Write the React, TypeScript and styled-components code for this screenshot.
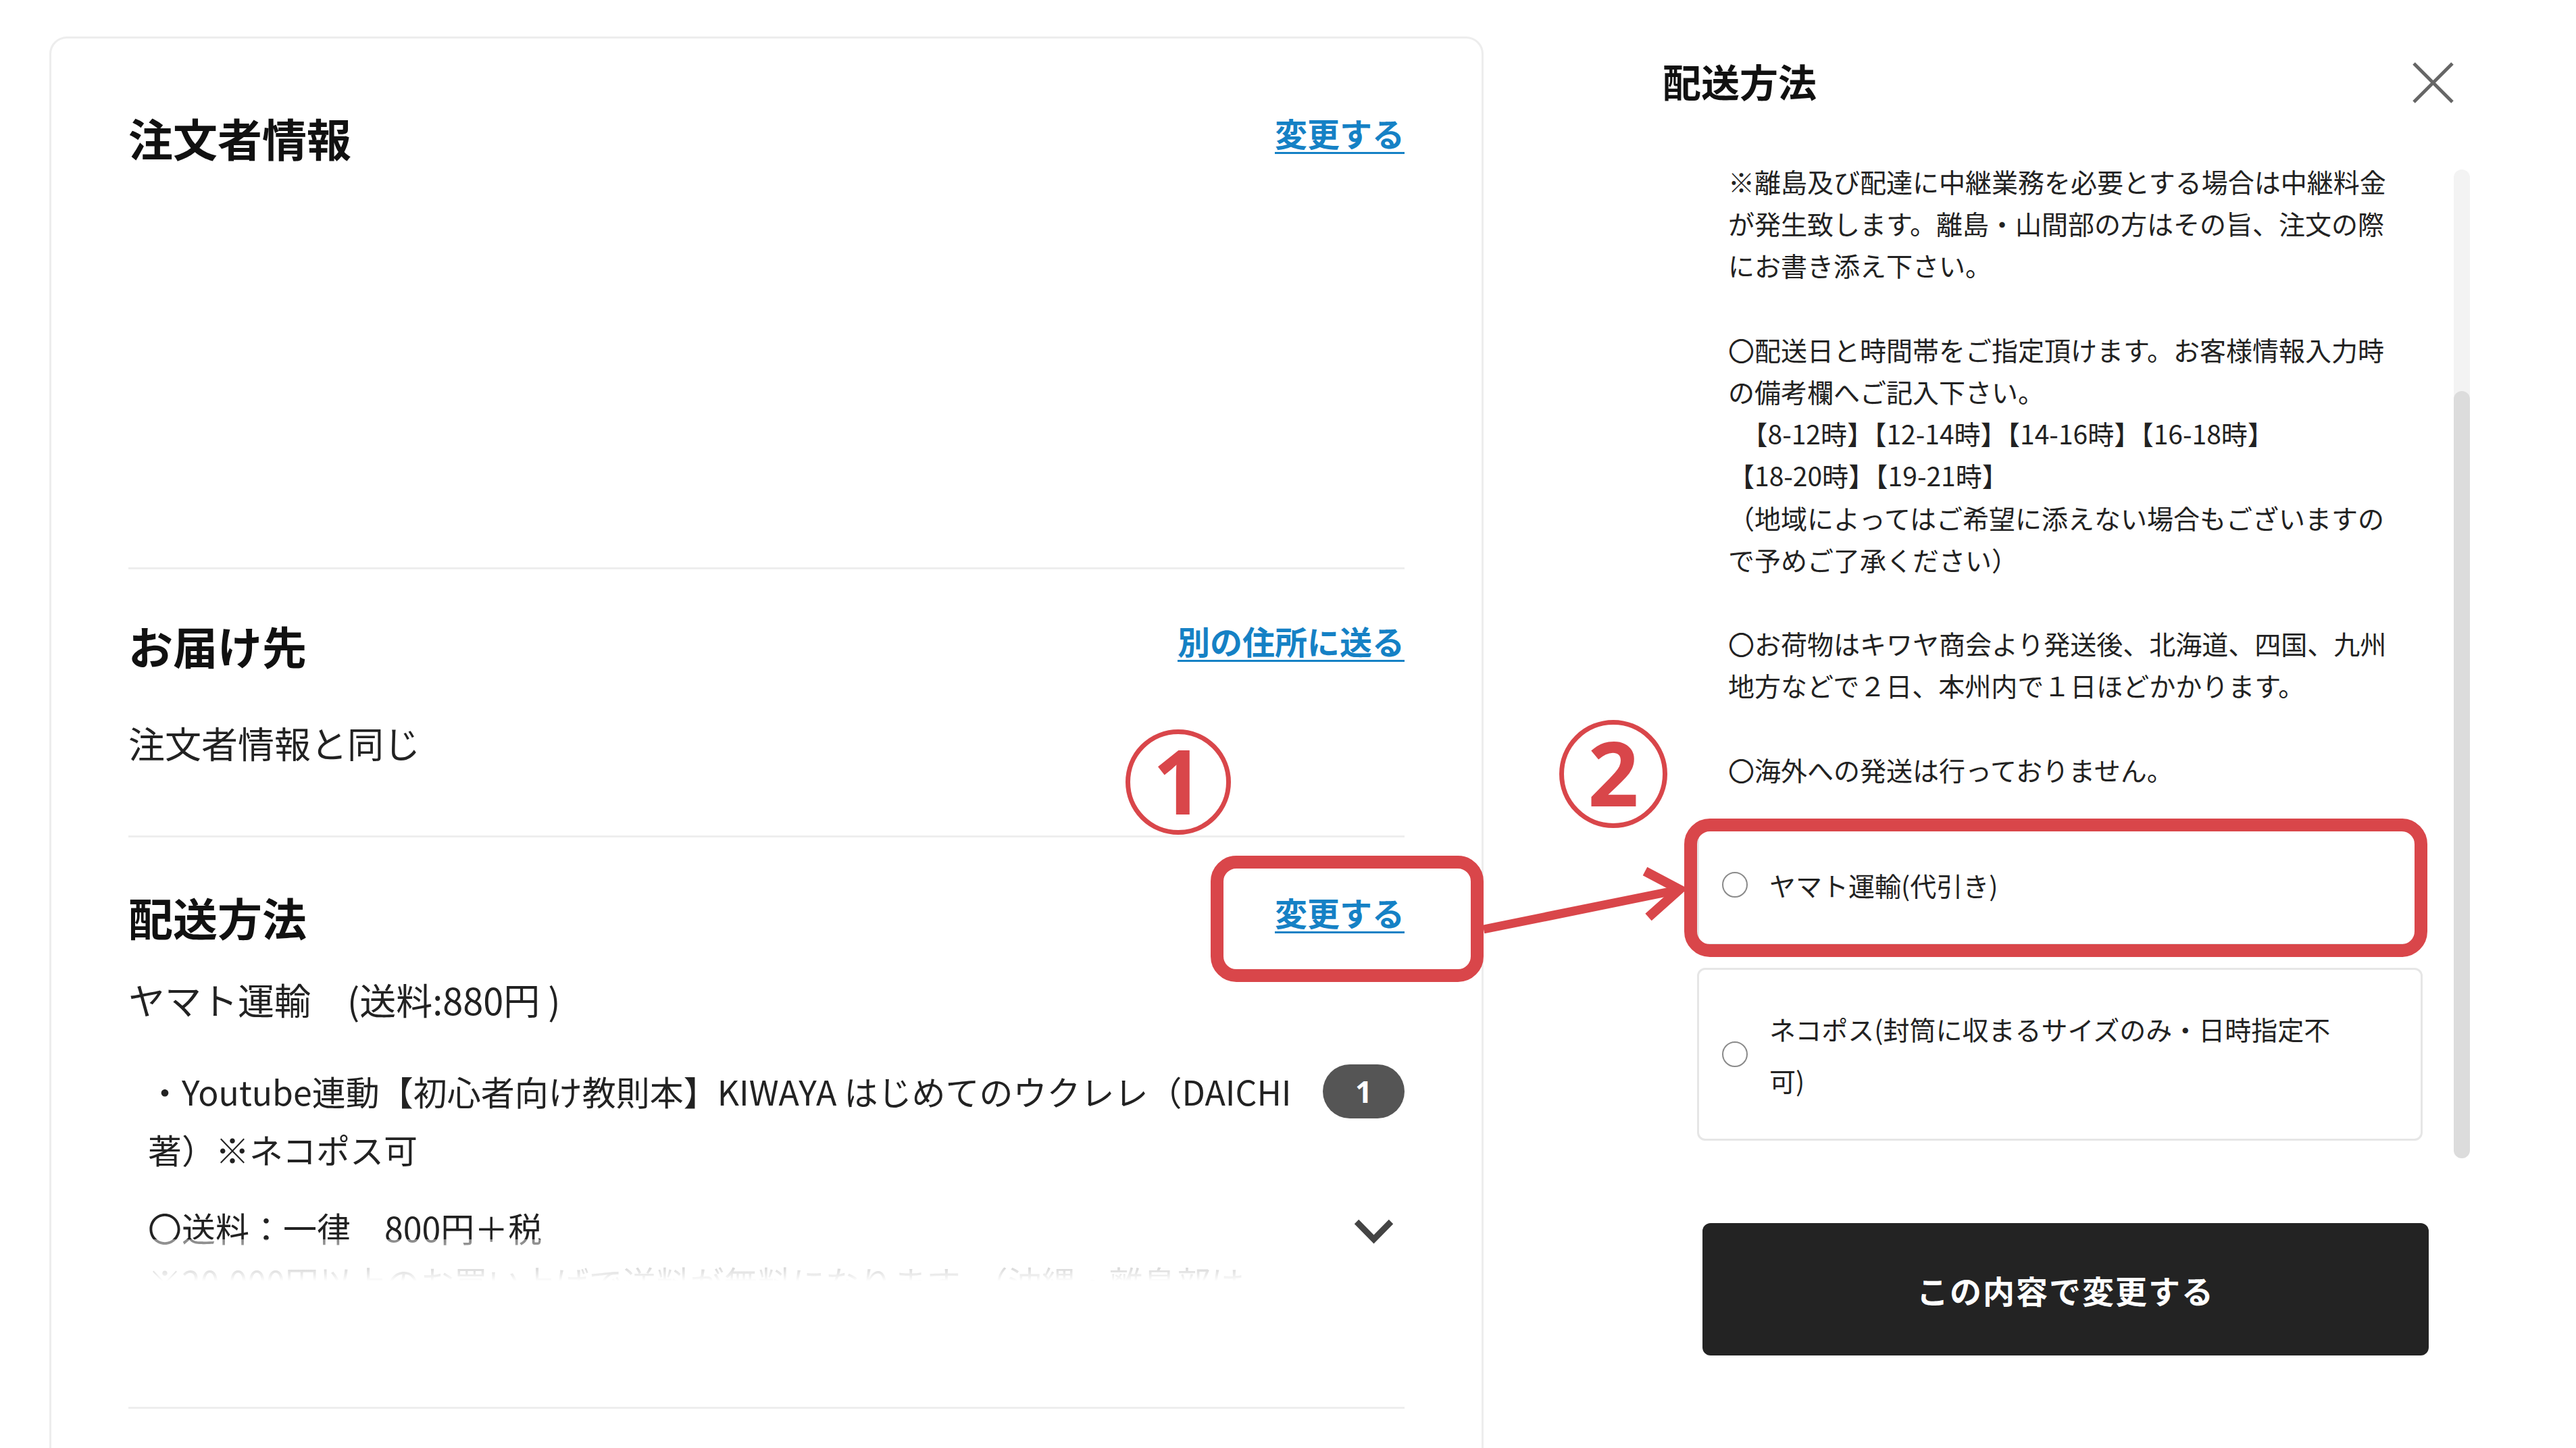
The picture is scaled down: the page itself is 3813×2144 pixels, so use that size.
import React from 'react'
import styled, { createGlobalStyle } from 'styled-components'

const GlobalStyle = createGlobalStyle`
  html, body {
    margin: 0;
    padding: 0;
    background: #ffffff;
  }
  body {
    font-family: "Noto Sans CJK JP", "Noto Sans", sans-serif;
    color: #222222;
  }
`

const RED = '#d9464a'

const Page = styled.div`
  position: relative;
  display: flex;
  width: 3813px;
  height: 2144px;
  overflow: hidden;
  background: #ffffff;
`

/* ---------- left: order summary card ---------- */

const LeftArea = styled.div`
  padding: 54px 0 0 73px;
  width: 2123px;
  flex-shrink: 0;
`

const Card = styled.div`
  box-sizing: border-box;
  width: 2123px;
  min-height: 2300px;
  border: 3px solid #ededed;
  border-radius: 26px;
  padding: 0 114px;
`

interface SectionProps {
  $pt: number
  $pb: number
}

const Section = styled.section<SectionProps>`
  padding-top: ${({ $pt }) => $pt}px;
  padding-bottom: ${({ $pb }) => $pb}px;
  border-bottom: 3px solid #eeeeee;
`

const SectionHeader = styled.div`
  display: flex;
  align-items: center;
  justify-content: space-between;
`

const SectionTitle = styled.h2`
  margin: 0;
  font-size: 66px;
  line-height: 92px;
  font-weight: 700;
  color: #111111;
`

const TextLink = styled.a`
  margin-bottom: 14px;
  font-size: 48px;
  line-height: 70px;
  font-weight: 700;
  color: #1581c5;
  text-decoration: underline;
  text-decoration-thickness: 3px;
  text-underline-offset: 8px;
  cursor: pointer;
`

const BodyText = styled.p<{ $mt: number }>`
  margin: ${({ $mt }) => $mt}px 0 0;
  font-size: 54px;
  line-height: 81px;
  color: #222222;
`

const ItemRow = styled.div`
  display: flex;
  align-items: flex-start;
  justify-content: space-between;
  margin-top: 52px;
  padding-left: 29px;
`

const ItemName = styled.div`
  font-size: 50px;
  line-height: 86px;
  white-space: nowrap;
  color: #222222;
`

const QtyBadge = styled.span`
  display: flex;
  align-items: center;
  justify-content: center;
  width: 121px;
  height: 80px;
  margin-top: 4px;
  border-radius: 40px;
  background: #555555;
  color: #ffffff;
  font-family: "Noto Sans", sans-serif;
  font-size: 44px;
  font-weight: 700;
`

const DescRow = styled.div`
  display: flex;
  align-items: flex-start;
  justify-content: space-between;
  margin-top: 33px;
  padding-left: 29px;
`

const DescText = styled.div`
  position: relative;
  max-height: 120px;
  overflow: hidden;
  font-size: 50px;
  line-height: 80px;
  white-space: pre;
  color: #222222;

  &::after {
    content: "";
    position: absolute;
    left: 0;
    right: 0;
    bottom: 0;
    height: 62px;
    background: linear-gradient(rgba(255, 255, 255, 0.45), #ffffff);
  }
`

const ToggleButton = styled.button`
  display: flex;
  margin: 26px 14px 0 0;
  padding: 0;
  border: none;
  background: none;
  cursor: pointer;
`

/* ---------- right: shipping method drawer ---------- */

const Drawer = styled.aside`
  display: flex;
  flex-direction: column;
  margin-left: auto;
  width: 1352px;
  padding-top: 80px;
`

const DrawerHeader = styled.div`
  display: flex;
  align-items: center;
  justify-content: space-between;
  height: 78px;
  padding-right: 180px;
`

const DrawerTitle = styled.h3`
  margin: 0;
  font-size: 57px;
  line-height: 78px;
  font-weight: 700;
  color: #111111;
`

const CloseButton = styled.button`
  display: flex;
  width: 63px;
  height: 63px;
  margin-top: 6px;
  padding: 0;
  border: none;
  background: none;
  cursor: pointer;
`

const ScrollArea = styled.div`
  display: flex;
  gap: 46px;
  height: 1478px;
  margin: 79px 157px 0 51px;
`

const ScrollContent = styled.div`
  width: 1074px;
  overflow: hidden;
`

const Notes = styled.div`
  padding-left: 46px;
  font-size: 39px;
  line-height: 62.2px;
  white-space: pre;
  color: #222222;
`

const OptionList = styled.div`
  display: flex;
  flex-direction: column;
  gap: 33px;
  margin-top: 50px;
`

const OptionCard = styled.label`
  display: flex;
  align-items: center;
  border: 3px solid #e6e6e6;
  border-radius: 12px;
  padding: 49px 40px 49px 34px;
  background: #ffffff;
  cursor: pointer;
`

const Radio = styled.span`
  box-sizing: border-box;
  flex-shrink: 0;
  width: 38px;
  height: 38px;
  margin-right: 32px;
  border: 2.5px solid #8a8a8a;
  border-radius: 50%;
  background: #ffffff;
`

const OptionLabel = styled.span`
  max-width: 862px;
  font-size: 39px;
  line-height: 76px;
  color: #222222;
`

const ScrollTrack = styled.div`
  position: relative;
  width: 24px;
  margin-top: 14px;
  border-radius: 12px;
  background: #f3f3f3;
`

const ScrollThumb = styled.div`
  position: absolute;
  left: 0;
  right: 0;
  top: 328px;
  bottom: 0;
  border-radius: 12px;
  background: #dcdcdc;
`

const SubmitButton = styled.button`
  width: 1075px;
  height: 196px;
  margin: 96px 0 0 59px;
  border: none;
  border-radius: 12px;
  background: #232323;
  color: #ffffff;
  font-family: "Noto Sans CJK JP", sans-serif;
  font-size: 47px;
  font-weight: 700;
  letter-spacing: 2px;
  cursor: pointer;
`

/* ---------- annotation overlays ---------- */

interface BoxProps {
  $x: number
  $y: number
  $w: number
  $h: number
}

const RedFrame = styled.div<BoxProps>`
  position: absolute;
  box-sizing: border-box;
  left: ${({ $x }) => $x}px;
  top: ${({ $y }) => $y}px;
  width: ${({ $w }) => $w}px;
  height: ${({ $h }) => $h}px;
  border: 19px solid ${RED};
  border-radius: 38px;
  pointer-events: none;
`

const StepMark = styled.div<BoxProps>`
  position: absolute;
  box-sizing: border-box;
  display: flex;
  align-items: center;
  justify-content: center;
  left: ${({ $x }) => $x}px;
  top: ${({ $y }) => $y}px;
  width: ${({ $w }) => $w}px;
  height: ${({ $h }) => $h}px;
  border: 7px solid ${RED};
  border-radius: 50%;
  background: #ffffff;
  color: ${RED};
  font-family: "Noto Sans", "Liberation Sans", sans-serif;
  font-size: 132px;
  font-weight: 700;
  line-height: 1;
  padding-bottom: 6px;
`

const ArrowMark = styled.svg`
  position: absolute;
  left: 2190px;
  top: 1270px;
  width: 320px;
  height: 130px;
  overflow: visible;
  pointer-events: none;
`

const notes = [
  '※離島及び配達に中継業務を必要とする場合は中継料金',
  'が発生致します。離島・山間部の方はその旨、注文の際',
  'にお書き添え下さい。',
  '',
  '〇配送日と時間帯をご指定頂けます。お客様情報入力時',
  'の備考欄へご記入下さい。',
  '　【8-12時】【12-14時】【14-16時】【16-18時】',
  '【18-20時】【19-21時】',
  '（地域によってはご希望に添えない場合もございますの',
  'で予めご了承ください）',
  '',
  '〇お荷物はキワヤ商会より発送後、北海道、四国、九州',
  '地方などで２日、本州内で１日ほどかかります。',
  '',
  '〇海外への発送は行っておりません。',
].join('\n')

const shippingOptions = [
  'ヤマト運輸(代引き)',
  'ネコポス(封筒に収まるサイズのみ・日時指定不可)',
]

const App: React.FC = () => {
  return (
    <>
      <GlobalStyle />
      <Page>
        <LeftArea>
          <Card>
            <Section $pt={100} $pb={591}>
              <SectionHeader>
                <SectionTitle>注文者情報</SectionTitle>
                <TextLink>変更する</TextLink>
              </SectionHeader>
            </Section>

            <Section $pt={66} $pb={97}>
              <SectionHeader>
                <SectionTitle>お届け先</SectionTitle>
                <TextLink>別の住所に送る</TextLink>
              </SectionHeader>
              <BodyText $mt={58}>注文者情報と同じ</BodyText>
            </Section>

            <Section $pt={71} $pb={186}>
              <SectionHeader>
                <SectionTitle>配送方法</SectionTitle>
                <TextLink>変更する</TextLink>
              </SectionHeader>
              <BodyText $mt={36}>ヤマト運輸　(送料:880円 )</BodyText>
              <ItemRow>
                <ItemName>
                  ・Youtube連動【初心者向け教則本】KIWAYA はじめてのウクレレ（DAICHI
                  <br />
                  著）※ネコポス可
                </ItemName>
                <QtyBadge>1</QtyBadge>
              </ItemRow>
              <DescRow>
                <DescText>
                  {'〇送料：一律　800円＋税\n※20,000円以上のお買い上げで送料が無料になります。（沖縄・離島部は'}
                </DescText>
                <ToggleButton aria-label="開く">
                  <svg width="63" height="39" viewBox="0 0 63 39">
                    <polyline points="6,6 31.5,32 57,6" fill="none" stroke="#444444" strokeWidth="9" />
                  </svg>
                </ToggleButton>
              </DescRow>
            </Section>
          </Card>
        </LeftArea>

        <Drawer>
          <DrawerHeader>
            <DrawerTitle>配送方法</DrawerTitle>
            <CloseButton aria-label="閉じる">
              <svg width="63" height="63" viewBox="0 0 63 63">
                <line x1="3" y1="3" x2="60" y2="60" stroke="#666666" strokeWidth="5" />
                <line x1="60" y1="3" x2="3" y2="60" stroke="#666666" strokeWidth="5" />
              </svg>
            </CloseButton>
          </DrawerHeader>

          <ScrollArea>
            <ScrollContent>
              <Notes>{notes}</Notes>
              <OptionList>
                {shippingOptions.map((option) => (
                  <OptionCard key={option}>
                    <Radio />
                    <OptionLabel>{option}</OptionLabel>
                  </OptionCard>
                ))}
              </OptionList>
            </ScrollContent>
            <ScrollTrack>
              <ScrollThumb />
            </ScrollTrack>
          </ScrollArea>

          <SubmitButton>この内容で変更する</SubmitButton>
        </Drawer>

        <StepMark $x={1666} $y={1080} $w={156} $h={156}>1</StepMark>
        <StepMark $x={2308} $y={1066} $w={160} $h={160}>2</StepMark>
        <RedFrame $x={1792} $y={1267} $w={404} $h={187} />
        <RedFrame $x={2493} $y={1212} $w={1100} $h={205} />
        <ArrowMark viewBox="0 0 320 130">
          <line x1="6" y1="106" x2="292" y2="48" stroke={RED} strokeWidth="13" />
          <polyline
            points="245,20 296,47 250,88"
            fill="none"
            stroke={RED}
            strokeWidth="14"
            strokeLinejoin="miter"
          />
        </ArrowMark>
      </Page>
    </>
  )
}

export default App
